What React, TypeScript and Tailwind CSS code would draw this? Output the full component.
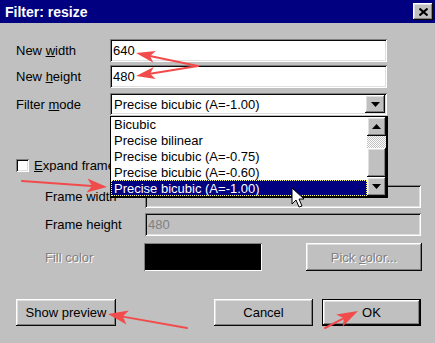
import React from "react";

const sunken =
  "shadow-[inset_1px_1px_#808080,inset_-1px_-1px_#ffffff,inset_2px_2px_#0a0a0a,inset_-2px_-2px_#dfdfdf]";
const raised =
  "shadow-[inset_-1px_-1px_#0a0a0a,inset_1px_1px_#ffffff,inset_-2px_-2px_#808080,inset_2px_2px_#dfdfdf]";
const disabledText = "text-[#808080] [text-shadow:1px_1px_0_#ffffff]";

function Arrow({ x1, y1, x2, y2, len, w }: { x1: number; y1: number; x2: number; y2: number; len: number; w: number }) {
  const dx = x2 - x1;
  const dy = y2 - y1;
  const d = Math.hypot(dx, dy);
  const ux = dx / d;
  const uy = dy / d;
  const bx = x2 - ux * len;
  const by = y2 - uy * len;
  const px = (-uy * w) / 2;
  const py = (ux * w) / 2;
  const nx = x2 - ux * len * 0.75;
  const ny = y2 - uy * len * 0.75;
  return (
    <g>
      <line x1={x1} y1={y1} x2={nx} y2={ny} stroke="#f24b4b" strokeWidth={2} strokeLinecap="round" />
      <polygon
        points={`${x2},${y2} ${bx + px},${by + py} ${nx},${ny} ${bx - px},${by - py}`}
        fill="#f24b4b"
      />
    </g>
  );
}

function TriDown() {
  return (
    <svg width="9" height="5" viewBox="0 0 9 5">
      <polygon points="0,0 9,0 4.5,5" fill="#000" />
    </svg>
  );
}

function TriUp() {
  return (
    <svg width="9" height="5" viewBox="0 0 9 5">
      <polygon points="0,5 9,5 4.5,0" fill="#000" />
    </svg>
  );
}

const items = [
  "Bicubic",
  "Precise bilinear",
  "Precise bicubic (A=-0.75)",
  "Precise bicubic (A=-0.60)",
  "Precise bicubic (A=-1.00)",
];

export default function App() {
  return (
    <div
      className="relative w-[435px] h-[343px] overflow-hidden bg-[#c0c0c0] text-[13px] leading-none text-black"
      style={{ fontFamily: '"Liberation Sans", Arial, sans-serif' }}
    >
      {/* title bar */}
      <div className="flex h-[23px] items-center justify-between bg-[#000080] pl-[5px] pr-[2px]">
        <span className="text-[14px] font-bold text-white">Filter: resize</span>
        <div className={`flex h-[17px] w-[20px] items-center justify-center bg-[#c0c0c0] ${raised}`}>
          <svg width="9" height="8" viewBox="0 0 9 8">
            <path d="M0.5 0.5 L8.5 7.5 M8.5 0.5 L0.5 7.5" stroke="#000" strokeWidth="2" />
          </svg>
        </div>
      </div>

      <div className="flex flex-col pl-[16px]">
        <div className="mt-[16px] flex h-[23px] items-center">
          <span className="w-[94px]">
            New <u>w</u>idth
          </span>
          <div className={`flex h-[23px] w-[277px] items-center bg-white pl-[3px] ${sunken}`}>640</div>
        </div>
        <div className="mt-[3px] flex h-[23px] items-center">
          <span className="w-[94px]">
            New <u>h</u>eight
          </span>
          <div className={`flex h-[23px] w-[277px] items-center bg-white pl-[3px] ${sunken}`}>480</div>
        </div>
        <div className="mt-[5px] flex h-[22px] items-center">
          <span className="w-[94px]">
            Filter <u>m</u>ode
          </span>
          <div className={`flex h-[22px] w-[277px] items-center justify-between bg-white pl-[4px] pr-[2px] ${sunken}`}>
            <span>Precise bicubic (A=-1.00)</span>
            <div className={`flex h-[18px] w-[20px] items-center justify-center bg-[#c0c0c0] ${raised}`}>
              <TriDown />
            </div>
          </div>
        </div>

        <div className="mt-[44px] flex h-[13px] items-center">
          <div className={`h-[13px] w-[13px] bg-white ${sunken}`} />
          <span className="ml-[5px] w-[76px] overflow-hidden whitespace-nowrap">
            <u>E</u>xpand frame
          </span>
        </div>

        <div className="mt-[13px] flex h-[23px] items-center pl-[29px]">
          <span className="w-[100px]">Frame width</span>
          <div className={`flex h-[23px] w-[276px] items-end pb-[3px] pl-[3px] ${sunken}`}>
            <span className="h-[4px] overflow-hidden leading-[4px] text-[#808080]">
              <span className="relative -top-[9px]">640</span>
            </span>
          </div>
        </div>
        <div className="mt-[5px] flex h-[23px] items-center pl-[29px]">
          <span className="w-[100px]">Frame height</span>
          <div className={`flex h-[23px] w-[276px] items-center pl-[3px] text-[#808080] ${sunken}`}>480</div>
        </div>
        <div className="mt-[7px] flex h-[28px] items-center pl-[29px]">
          <span className={`w-[99px] ${disabledText}`}>Fill color</span>
          <div className="h-[28px] w-[118px] bg-black shadow-[inset_1px_1px_#808080,inset_-1px_-1px_#ffffff]" />
          <div className={`ml-[44px] flex h-[28px] w-[116px] items-center justify-center ${raised} ${disabledText}`}>
            <span>
              Pick <u>c</u>olor...
            </span>
          </div>
        </div>

        <div className="mt-[28px] flex h-[27px] items-center">
          <div className={`flex h-[27px] w-[100px] items-center justify-center ${raised}`}>Show preview</div>
          <div className={`ml-[98px] flex h-[27px] w-[99px] items-center justify-center ${raised}`}>Cancel</div>
          <div className="ml-[9px] h-[27px] w-[99px] border border-black">
            <div className={`flex h-full w-full items-center justify-center ${raised}`}>OK</div>
          </div>
        </div>
      </div>

      {/* open dropdown list */}
      <div className="absolute left-[110px] top-[116px] z-10 flex h-[82px] w-[278px] border border-r-2 border-b-2 border-black bg-white">
        <div className="flex flex-1 flex-col">
          {items.map((it, i) => (
            <div
              key={it}
              className={
                i === 4
                  ? "flex h-[16px] items-center border border-dotted border-[#ffff80] bg-[#000080] pl-[2px] text-white"
                  : "flex h-[16px] items-center pl-[3px]"
              }
            >
              {it}
            </div>
          ))}
        </div>
        <div className="flex w-[19px] flex-col">
          <div className={`flex h-[19px] items-center justify-center bg-[#c0c0c0] ${raised}`}>
            <TriUp />
          </div>
          <div className="h-[12px] bg-[repeating-conic-gradient(#c0c0c0_0_25%,#ffffff_0_50%)] bg-[length:2px_2px]" />
          <div className={`h-[29px] bg-[#c0c0c0] ${raised}`} />
          <div className={`flex h-[19px] items-center justify-center bg-[#c0c0c0] ${raised}`}>
            <TriDown />
          </div>
        </div>
      </div>

      {/* annotations */}
      <svg className="pointer-events-none absolute left-0 top-0 z-20" width="435" height="343" viewBox="0 0 435 343">
        <Arrow x1={198} y1={66} x2={136} y2={53} len={19} w={12} />
        <Arrow x1={198} y1={66} x2={136} y2={76} len={19} w={12} />
        <Arrow x1={22} y1={181} x2={107} y2={187} len={20} w={14} />
        <Arrow x1={187} y1={328} x2={108} y2={314} len={20} w={14} />
        <Arrow x1={325} y1={328} x2={358} y2={311} len={21} w={14} />
        <polygon
          points="292,188 292,204 296,200 299,207 302,206 299,199 304,199"
          fill="#ffffff"
          stroke="#000000"
          strokeWidth="1"
          strokeLinejoin="round"
        />
      </svg>
    </div>
  );
}
